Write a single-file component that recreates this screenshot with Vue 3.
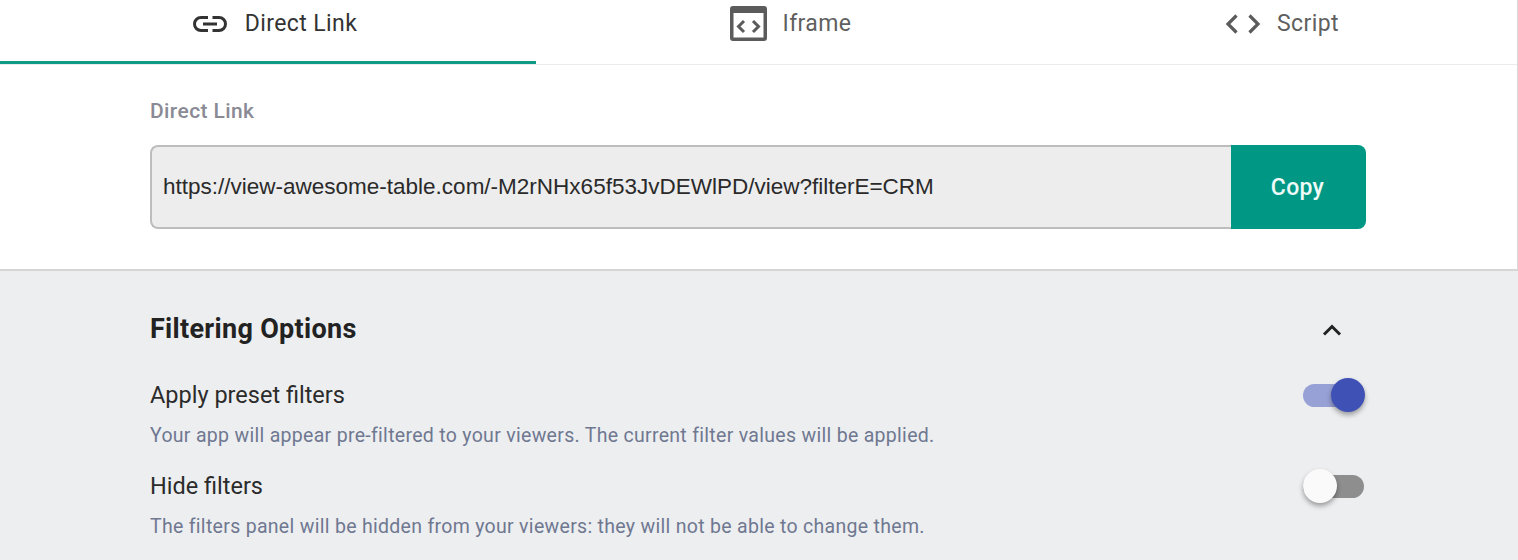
<script setup>
const options = [
  { title: 'Apply preset filters', desc: 'Your app will appear pre-filtered to your viewers. The current filter values will be applied.', on: true },
  { title: 'Hide filters', desc: 'The filters panel will be hidden from your viewers: they will not be able to change them.', on: false },
]
</script>

<template>
  <div class="page">
    <div class="top">
      <nav class="tabs">
        <div class="tab tab-active">
          <svg viewBox="0 0 36 18" width="36" height="18">
            <path d="M15 2.500H8a6.500 6.500 0 0 0 0 13h7M19.500 2.500h6.500a6.500 6.500 0 0 1 0 13h-6.500M10 9h14" fill="none" stroke="#333" stroke-width="3"/>
          </svg>
          <span>Direct Link</span>
        </div>
        <div class="tab tab-mid">
          <svg viewBox="0 0 37 35" width="37" height="35">
            <path fill-rule="evenodd" d="M3 0h31a3 3 0 0 1 3 3v29a3 3 0 0 1-3 3H3a3 3 0 0 1-3-3V3a3 3 0 0 1 3-3zM3.500 7V31.500H33.500V7z" fill="#5b5b5b"/>
            <path d="M14 15l-5.500 5.500 5.500 5.500M23 15l5.500 5.500-5.500 5.500" fill="none" stroke="#5b5b5b" stroke-width="3"/>
          </svg>
          <span>Iframe</span>
        </div>
        <div class="tab tab-last">
          <svg viewBox="0 0 36 20" width="36" height="20">
            <path d="M11.500 1.500L3 10l8.500 8.500M24.500 1.500L33 10l-8.500 8.500" fill="none" stroke="#5b5b5b" stroke-width="3.200"/>
          </svg>
          <span>Script</span>
        </div>
      </nav>
      <div class="link-section">
        <div class="label">Direct Link</div>
        <div class="field">
          <div class="url">https://view-awesome-table.com/-M2rNHx65f53JvDEWlPD/view?filterE=CRM</div>
          <div class="copy">Copy</div>
        </div>
      </div>
    </div>
    <section class="filters">
      <div class="head">
        <h2>Filtering Options</h2>
        <svg class="chev" viewBox="0 0 20 12" width="20" height="12">
          <path d="M2 10.500l8-8 8 8" fill="none" stroke="#222" stroke-width="3"/>
        </svg>
      </div>
      <div v-for="o in options" :key="o.title" class="opt">
        <div class="opt-row">
          <div class="opt-title">{{ o.title }}</div>
          <div class="switch" :class="{ on: o.on }"><i class="knob"></i></div>
        </div>
        <div class="opt-desc">{{ o.desc }}</div>
      </div>
    </section>
  </div>
</template>

<style>
html, body { margin: 0; background: #edeef0; }
</style>

<style scoped>
.page {
  width: 1518px;
  height: 560px;
  overflow: hidden;
  font-family: Roboto, "Liberation Sans", sans-serif;
  background: #edeef0;
}
.top {
  background: #fff;
  border-right: 1px solid #d8d8d8;
  border-bottom: 2px solid #d5d5d5;
  height: 269px;
}
.tabs {
  display: grid;
  grid-template-columns: 536px 508px 473px;
  height: 65px;
  border-bottom: 1px solid #ececec;
  box-sizing: border-box;
}
.tab {
  display: flex;
  align-items: center;
  justify-content: center;
  gap: 15px;
  height: 64px;
  padding-bottom: 17px;
  box-sizing: border-box;
  font-size: 23px;
  letter-spacing: .4px;
  color: #5f5f5f;
  line-height: 47px;
}
.tab-active {
  color: #333;
  gap: 16px;
  padding-left: 14px;
  border-bottom: 3px solid #0f9a88;
  padding-bottom: 14px;
}
.tab-mid { gap: 16px; padding-left: 1px; }
.tab-last { padding-left: 3px; gap: 16px; }
.link-section { padding: 0 151px 0 150px; }
.label {
  margin-top: 33px;
  font-size: 21px;
  letter-spacing: .4px;
  font-weight: 500;
  line-height: 26px;
  color: #8a8a95;
}
.field {
  display: flex;
  height: 84px;
  margin-top: 21px;
}
.url {
  flex: 1;
  display: flex;
  align-items: center;
  padding-left: 11px;
  background: #ededed;
  border: 2px solid #bdbdbd;
  border-right: 0;
  border-radius: 8px 0 0 8px;
  font-family: "Liberation Sans", Arial, sans-serif;
  font-size: 22.500px;
  color: #2a2a2a;
}
.copy {
  width: 133px;
  padding-right: 2px;
  display: flex;
  align-items: center;
  justify-content: center;
  background: #009885;
  border-radius: 0 8px 8px 0;
  color: #eefaf7;
  font-size: 23px;
  letter-spacing: .3px;
  font-weight: 500;
}
.filters { padding: 0 154px 0 150px; }
.head {
  display: flex;
  justify-content: space-between;
  align-items: center;
  height: 30px;
  margin-top: 43px;
}
h2 {
  margin: 0;
  font-size: 27px;
  letter-spacing: .3px;
  font-weight: 700;
  color: #222;
  line-height: 30px;
}
.chev { margin: 2px 22px 0 0; }
.opt-row {
  display: flex;
  justify-content: space-between;
  align-items: center;
  height: 48px;
}
.head + .opt { margin-top: 27px; }
.opt-title {
  font-size: 23.500px;
  color: #2b2b2b;
  line-height: 30px;
}
.opt-desc {
  font-size: 19.500px;
  letter-spacing: .3px;
  line-height: 28px;
  color: #6f7890;
  margin-top: 3px;
  height: 40px;
}
.switch {
  position: relative;
  width: 61px;
  height: 23px;
  border-radius: 12px;
  background: #8e8e8e;
}
.switch.on { background: #97a1d5; }
.knob {
  position: absolute;
  top: -6px;
  left: 0;
  width: 34px;
  height: 34px;
  border-radius: 50%;
  background: #fafafa;
  box-shadow: 0 3px 5px rgba(0,0,0,.35);
}
.switch.on .knob {
  left: auto;
  right: -1px;
  background: #3f51b5;
}
</style>
